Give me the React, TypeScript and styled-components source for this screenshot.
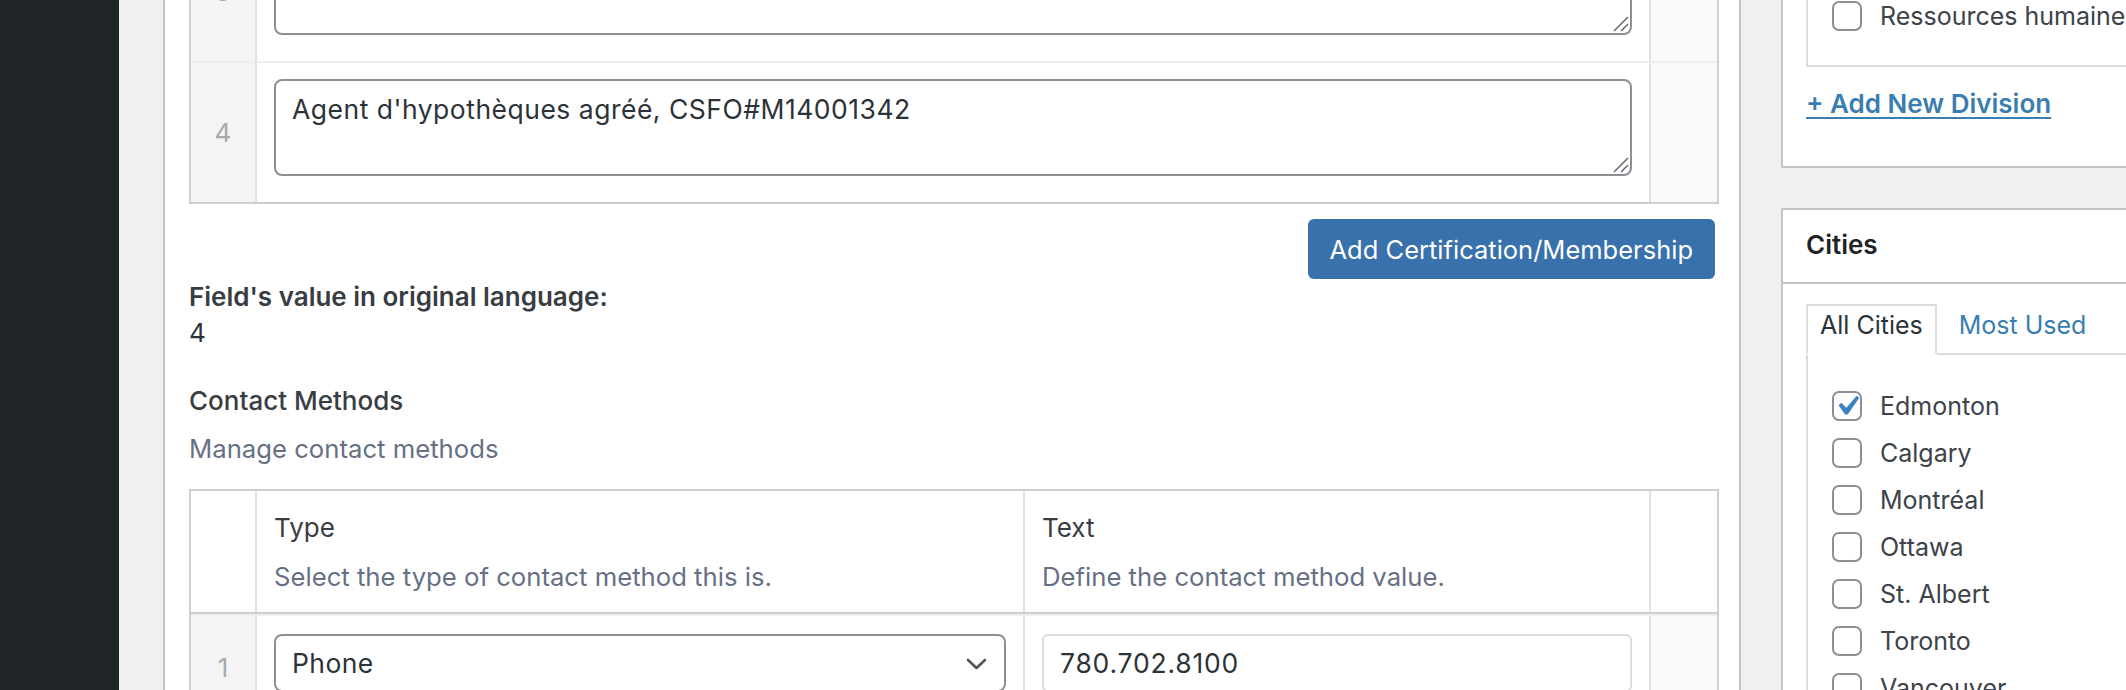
import React from 'react';
import styled, { createGlobalStyle } from 'styled-components';

const GlobalStyle = createGlobalStyle`
  html, body {
    margin: 0;
    padding: 0;
  }
  body {
    width: 2126px;
    height: 690px;
    overflow: hidden;
    background: #f0f0f1;
    font-family: Inter, "Noto Sans", sans-serif;
    color: #3c434a;
  }
  * {
    box-sizing: border-box;
  }
`;

const Shell = styled.div`
  display: flex;
  width: 2126px;
  height: 690px;
  overflow: hidden;
`;

const AdminMenu = styled.div`
  flex: 0 0 119px;
  background: #1f2427;
`;

const Workspace = styled.div`
  flex: 1;
  display: flex;
  align-items: flex-start;
  gap: 40px;
  padding-left: 44px;
  min-width: 0;
`;

const MainPanel = styled.div`
  flex: 0 0 1578px;
  align-self: stretch;
  background: #fff;
  border-left: 2px solid #c3c4c7;
  border-right: 2px solid #c3c4c7;
  padding: 0 20px 0 24px;
`;

const Repeater = styled.div<{ $offset?: number }>`
  border: 2px solid #ccd0d4;
  margin-top: ${(p) => p.$offset ?? 0}px;
`;

const Row = styled.div<{ $cols: string; $head?: boolean }>`
  display: grid;
  grid-template-columns: ${(p) => p.$cols};
  border-bottom: ${(p) => (p.$head ? '2px solid #ccd0d4' : 'none')};
  & + & {
    border-top: ${(p) => (p.$head ? 'none' : '2px solid #eeeeee')};
  }
`;

const NumCell = styled.div<{ $head?: boolean }>`
  display: flex;
  align-items: center;
  justify-content: center;
  background: ${(p) => (p.$head ? '#fff' : '#f4f4f4')};
  border-right: 2px solid #e1e1e1;
  color: #a7aaad;
  font-size: 26px;
`;

const FieldCell = styled.div<{ $top?: number }>`
  padding: ${(p) => p.$top ?? 16}px 17px 26px;
  border-right: 2px solid #e1e1e1;
`;

const HeadCell = styled.div`
  padding: 19px 17px 18px;
  border-right: 2px solid #e1e1e1;
`;

const ActionCell = styled.div<{ $head?: boolean }>`
  background: ${(p) => (p.$head ? '#fff' : '#f9f9f9')};
`;

const AreaWrap = styled.div`
  position: relative;
`;

const TextArea = styled.textarea`
  display: block;
  width: 100%;
  height: 97px;
  padding: 10px 16px;
  border: 2px solid #8c8f94;
  border-radius: 8px;
  font: 400 26.5px/36px Inter, "Noto Sans", sans-serif;
  letter-spacing: 0.5px;
  color: #2c3338;
  background: #fff;
  resize: none;
  outline: none;
`;

const Grip = styled.svg`
  position: absolute;
  right: 2px;
  bottom: 2px;
`;

const Actions = styled.div`
  display: flex;
  justify-content: flex-end;
  padding: 15px 4px 0 0;
`;

const PrimaryButton = styled.button`
  height: 60px;
  padding: 0 22px;
  border: none;
  border-radius: 6px;
  background: #3871ab;
  color: #fff;
  font: 400 25.5px Inter, "Noto Sans", sans-serif;
  cursor: pointer;
`;

const Label = styled.div<{ $weight?: number; $gap?: number }>`
  margin-top: ${(p) => p.$gap ?? 0}px;
  font-size: 26px;
  line-height: 36px;
  font-weight: ${(p) => p.$weight ?? 400};
  color: #383d43;
`;

const Value = styled.div`
  font-size: 26px;
  line-height: 36px;
  color: #2c3338;
`;

const Instructions = styled.div<{ $gap?: number }>`
  margin-top: ${(p) => p.$gap ?? 0}px;
  font-size: 25.7px;
  line-height: 34px;
  color: #667085;
`;

const SelectWrap = styled.div`
  position: relative;
`;

const Select = styled.select`
  display: block;
  width: 100%;
  height: 58px;
  padding: 0 60px 0 16px;
  border: 2px solid #8c8f94;
  border-radius: 8px;
  background: #fff;
  appearance: none;
  font: 400 26.5px Inter, "Noto Sans", sans-serif;
  letter-spacing: 0.4px;
  color: #2c3338;
  outline: none;
`;

const Chevron = styled.svg`
  position: absolute;
  right: 19px;
  top: 24px;
  pointer-events: none;
`;

const TextInput = styled.input`
  display: block;
  width: 100%;
  height: 58px;
  padding: 0 16px;
  border: 2px solid #dcdcde;
  border-radius: 6px;
  font: 400 26.5px Inter, "Noto Sans", sans-serif;
  letter-spacing: 0.8px;
  color: #2c3338;
  background: #fff;
  outline: none;
`;

const Sidebar = styled.div`
  flex: 0 0 600px;
  display: flex;
  flex-direction: column;
  gap: 40px;
`;

const Postbox = styled.div<{ $offset?: number }>`
  background: #fff;
  border: 2px solid #c3c4c7;
  margin-top: ${(p) => p.$offset ?? 0}px;
`;

const BoxInner = styled.div<{ $pad: string }>`
  padding: ${(p) => p.$pad};
`;

const BoxTitle = styled.h2`
  margin: 0;
  padding: 17px 23px 19px;
  border-bottom: 2px solid #c3c4c7;
  font-size: 26px;
  line-height: 36px;
  font-weight: 600;
  color: #1d2327;
`;

const ListBox = styled.div<{ $pad: string }>`
  border: 2px solid #dcdcde;
  padding: ${(p) => p.$pad};
`;

const CheckRow = styled.div`
  display: flex;
  align-items: center;
  gap: 18px;
  height: 30px;
  white-space: nowrap;
  & + & {
    margin-top: 17px;
  }
`;

const CheckBox = styled.span`
  position: relative;
  flex: 0 0 30px;
  width: 30px;
  height: 30px;
  border: 2px solid #8c8f94;
  border-radius: 7px;
  background: #fff;
`;

const CheckMark = styled.svg`
  position: absolute;
  left: -7px;
  top: -7px;
`;

const CheckText = styled.span`
  font-size: 25px;
  line-height: 34px;
  color: #3c434a;
`;

const AddLink = styled.a`
  display: inline-block;
  margin-top: 20px;
  font-size: 26px;
  line-height: 34px;
  font-weight: 600;
  color: #3a7db0;
  text-decoration: underline;
  text-underline-offset: 4px;
`;

const Tabs = styled.div`
  display: flex;
  align-items: flex-start;
  gap: 20px;
`;

const Tab = styled.div<{ $active?: boolean }>`
  position: relative;
  z-index: 1;
  padding: ${(p) => (p.$active ? '2px 12px 11px' : '2px 0 11px')};
  margin-bottom: -2px;
  border: 2px solid ${(p) => (p.$active ? '#dcdcde' : 'transparent')};
  border-bottom-color: ${(p) => (p.$active ? '#fff' : 'transparent')};
  background: ${(p) => (p.$active ? '#fff' : 'transparent')};
  font-size: 25px;
  line-height: 34px;
  color: ${(p) => (p.$active ? '#2c3338' : '#3a7db0')};
`;

const certRows = [
  { n: 3, text: '' },
  { n: 4, text: "Agent d'hypothèques agréé, CSFO#M14001342" },
];

const cities = [
  { name: 'Edmonton', checked: true },
  { name: 'Calgary' },
  { name: 'Montréal' },
  { name: 'Ottawa' },
  { name: 'St. Albert' },
  { name: 'Toronto' },
  { name: 'Vancouver' },
];

function Check({ checked }: { checked?: boolean }) {
  return (
    <CheckBox>
      {checked && (
        <CheckMark width="40" height="40" viewBox="0 0 20 20">
          <path
            d="M14.83 4.89l1.34.94-5.81 8.38H9.02L5.78 9.67l1.34-1.25 2.57 2.4z"
            fill="#3b82c4"
          />
        </CheckMark>
      )}
    </CheckBox>
  );
}

function App() {
  return (
    <>
      <GlobalStyle />
      <Shell>
        <AdminMenu />
        <Workspace>
          <MainPanel>
            <Repeater $offset={-80}>
              {certRows.map((row) => (
                <Row key={row.n} $cols="66px 1fr 66px">
                  <NumCell>{row.n}</NumCell>
                  <FieldCell>
                    <AreaWrap>
                      <TextArea defaultValue={row.text} />
                      <Grip width="18" height="18" viewBox="0 0 18 18">
                        <path d="M2 16 L16 2 M9 16 L16 9" stroke="#6d7175" strokeWidth="1.6" />
                      </Grip>
                    </AreaWrap>
                  </FieldCell>
                  <ActionCell />
                </Row>
              ))}
            </Repeater>

            <Actions>
              <PrimaryButton>Add Certification/Membership</PrimaryButton>
            </Actions>

            <Label $weight={600}>Field's value in original language:</Label>
            <Value>4</Value>

            <Label $weight={500} $gap={32}>
              Contact Methods
            </Label>
            <Instructions $gap={13}>Manage contact methods</Instructions>

            <Repeater $offset={23}>
              <Row $head $cols="66px 768px 1fr 66px">
                <NumCell $head />
                <HeadCell>
                  <Label>Type</Label>
                  <Instructions $gap={14}>Select the type of contact method this is.</Instructions>
                </HeadCell>
                <HeadCell>
                  <Label>Text</Label>
                  <Instructions $gap={14}>Define the contact method value.</Instructions>
                </HeadCell>
                <ActionCell $head />
              </Row>
              <Row $cols="66px 768px 1fr 66px">
                <NumCell>1</NumCell>
                <FieldCell $top={18}>
                  <SelectWrap>
                    <Select defaultValue="phone">
                      <option value="phone">Phone</option>
                      <option value="email">Email</option>
                    </Select>
                    <Chevron width="21" height="12" viewBox="0 0 21 12">
                      <polyline
                        points="2,2 10.5,10 19,2"
                        fill="none"
                        stroke="#50575e"
                        strokeWidth="2.6"
                        strokeLinecap="round"
                        strokeLinejoin="round"
                      />
                    </Chevron>
                  </SelectWrap>
                </FieldCell>
                <FieldCell $top={18}>
                  <TextInput defaultValue="780.702.8100" />
                </FieldCell>
                <ActionCell />
              </Row>
            </Repeater>
          </MainPanel>

          <Sidebar>
            <Postbox $offset={-40}>
              <BoxInner $pad="12px 23px 45px">
                <ListBox $pad="25px 24px 34px">
                  <CheckRow>
                    <Check />
                    <CheckText>Ressources humaines</CheckText>
                  </CheckRow>
                </ListBox>
                <AddLink href="#">+ Add New Division</AddLink>
              </BoxInner>
            </Postbox>

            <Postbox>
              <BoxTitle>Cities</BoxTitle>
              <BoxInner $pad="20px 23px 40px">
                <Tabs>
                  <Tab $active>All Cities</Tab>
                  <Tab>Most Used</Tab>
                </Tabs>
                <ListBox $pad="36px 24px 30px">
                  {cities.map((c) => (
                    <CheckRow key={c.name}>
                      <Check checked={c.checked} />
                      <CheckText>{c.name}</CheckText>
                    </CheckRow>
                  ))}
                </ListBox>
              </BoxInner>
            </Postbox>
          </Sidebar>
        </Workspace>
      </Shell>
    </>
  );
}

export default App;
